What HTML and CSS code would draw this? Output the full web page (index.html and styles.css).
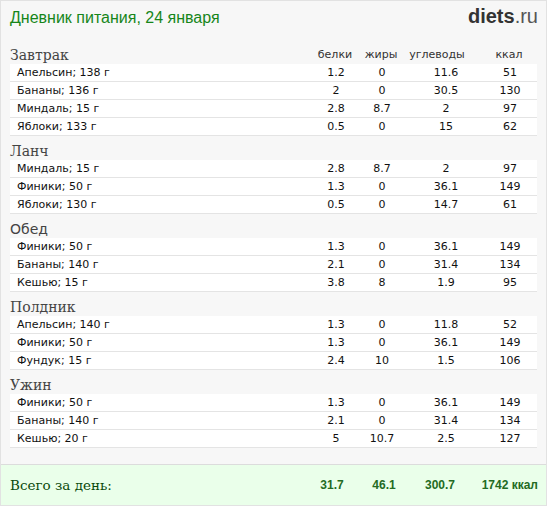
FILE: index.html
```html
<!DOCTYPE html>
<html lang="ru">
<head>
<meta charset="utf-8">
<title>Дневник питания</title>
<link rel="stylesheet" href="styles.css">
</head>
<body>
<div class="diary">
  <header class="top">
    <h1 class="title">Дневник питания, 24 января</h1>
    <div class="logo"><b>diets</b>.ru</div>
  </header>

  <section class="meal">
    <div class="meal-head">
      <h2 class="meal-name">Завтрак</h2>
      <div class="cols"><span>белки</span><span>жиры</span><span class="carb">углеводы</span><span>ккал</span></div>
    </div>
    <div class="row"><span class="name">Апельсин; 138 г</span><span>1.2</span><span>0</span><span>11.6</span><span>51</span></div>
    <div class="row"><span class="name">Бананы; 136 г</span><span>2</span><span>0</span><span>30.5</span><span>130</span></div>
    <div class="row"><span class="name">Миндаль; 15 г</span><span>2.8</span><span>8.7</span><span>2</span><span>97</span></div>
    <div class="row"><span class="name">Яблоки; 133 г</span><span>0.5</span><span>0</span><span>15</span><span>62</span></div>
  </section>

  <section class="meal">
    <div class="meal-head"><h2 class="meal-name">Ланч</h2></div>
    <div class="row"><span class="name">Миндаль; 15 г</span><span>2.8</span><span>8.7</span><span>2</span><span>97</span></div>
    <div class="row"><span class="name">Финики; 50 г</span><span>1.3</span><span>0</span><span>36.1</span><span>149</span></div>
    <div class="row"><span class="name">Яблоки; 130 г</span><span>0.5</span><span>0</span><span>14.7</span><span>61</span></div>
  </section>

  <section class="meal">
    <div class="meal-head"><h2 class="meal-name sans">Обед</h2></div>
    <div class="row"><span class="name">Финики; 50 г</span><span>1.3</span><span>0</span><span>36.1</span><span>149</span></div>
    <div class="row"><span class="name">Бананы; 140 г</span><span>2.1</span><span>0</span><span>31.4</span><span>134</span></div>
    <div class="row"><span class="name">Кешью; 15 г</span><span>3.8</span><span>8</span><span>1.9</span><span>95</span></div>
  </section>

  <section class="meal">
    <div class="meal-head"><h2 class="meal-name">Полдник</h2></div>
    <div class="row"><span class="name">Апельсин; 140 г</span><span>1.3</span><span>0</span><span>11.8</span><span>52</span></div>
    <div class="row"><span class="name">Финики; 50 г</span><span>1.3</span><span>0</span><span>36.1</span><span>149</span></div>
    <div class="row"><span class="name">Фундук; 15 г</span><span>2.4</span><span>10</span><span>1.5</span><span>106</span></div>
  </section>

  <section class="meal">
    <div class="meal-head"><h2 class="meal-name">Ужин</h2></div>
    <div class="row"><span class="name">Финики; 50 г</span><span>1.3</span><span>0</span><span>36.1</span><span>149</span></div>
    <div class="row"><span class="name">Бананы; 140 г</span><span>2.1</span><span>0</span><span>31.4</span><span>134</span></div>
    <div class="row"><span class="name">Кешью; 20 г</span><span>5</span><span>10.7</span><span>2.5</span><span>127</span></div>
  </section>

  <footer class="total">
    <span class="total-label">Всего за день:</span>
    <span class="tv">31.7</span><span class="tv">46.1</span><span class="tv">300.7</span><span class="tv kcal">1742 ккал</span>
  </footer>
</div>
</body>
</html>
```

FILE: styles.css
```css
* { box-sizing: border-box; }
html, body { margin: 0; padding: 0; background: #ffffff; }

.diary {
  width: 547px;
  height: 506px;
  background: #f7f7f7;
  border: 1px solid #e2e2e2;
  display: flex;
  flex-direction: column;
}

.top {
  height: 39px;
  display: flex;
  justify-content: space-between;
  align-items: flex-start;
  padding: 0 8px 0 9px;
}
.title {
  margin: 8px 0 0;
  font: normal 16px/18px "Liberation Sans", Arial, sans-serif;
  color: #16861a;
}
.logo {
  margin-top: 4px;
  font: normal 20px/22px "Liberation Sans", Arial, sans-serif;
  color: #555;
}
.logo b { color: #333; font-weight: bold; }

.meal-head {
  height: 24px;
  display: flex;
  align-items: flex-end;
  justify-content: space-between;
  padding: 0 0 0 9px;
}
.meal-name {
  margin: 0 0 1px;
  font: normal 14px/16px "DejaVu Serif", Georgia, serif;
  color: #444;
}
.meal-name.sans {
  font: normal 14px/16px "DejaVu Sans", Verdana, sans-serif;
  color: #444;
}
.cols {
  width: 224px;
  margin-right: 10px;
  display: grid;
  grid-template-columns: 46px 46px 82px 46px;
  font: normal 11px/13px "DejaVu Sans", Verdana, sans-serif;
  color: #333;
  text-align: center;
  margin-bottom: 3px;
}
.cols .carb { padding-right: 16px; }

.row {
  width: 527px;
  margin-left: 9px;
  height: 18px;
  background: #ffffff;
  border-bottom: 1px solid #e4e4e4;
  display: grid;
  grid-template-columns: 1fr 46px 46px 82px 46px;
  padding: 0 4px 0 7px;
  align-items: center;
  font: normal 11px/17px "DejaVu Sans", Verdana, sans-serif;
  color: #111;
  text-align: center;
}
.row .name { text-align: left; }

.total {
  margin-top: auto;
  height: 41px;
  background: #eaffea;
  border-top: 1px solid #dcdcdc;
  display: grid;
  grid-template-columns: 1fr 46px 58px 54px 71px;
  align-items: center;
  padding: 0 8px 0 9px;
  text-align: center;
}
.total-label {
  text-align: left;
  font: normal 13.5px/18px "DejaVu Serif", Georgia, serif;
  color: #0a4a0a;
}
.tv {
  font: bold 12px/14px "Liberation Sans", Arial, sans-serif;
  color: #236b23;
}
.tv.kcal { text-align: right; }
```
